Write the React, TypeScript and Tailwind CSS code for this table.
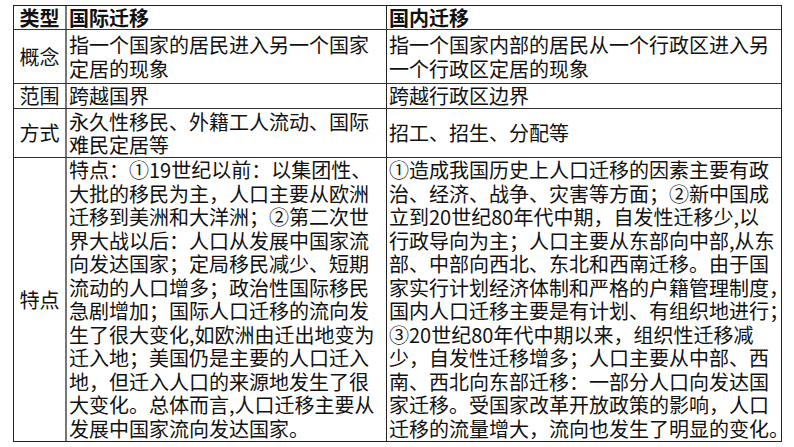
const cjk = { fontFamily: '"Noto Sans CJK SC", "Noto Sans", sans-serif' };

const intlLines = [
  '特点：①19世纪以前：以集团性、',
  '大批的移民为主，人口主要从欧洲',
  '迁移到美洲和大洋洲；②第二次世',
  '界大战以后：人口从发展中国家流',
  '向发达国家；定局移民减少、短期',
  '流动的人口增多；政治性国际移民',
  '急剧增加；国际人口迁移的流向发',
  '生了很大变化,如欧洲由迁出地变为',
  '迁入地；美国仍是主要的人口迁入',
  '地，但迁入人口的来源地发生了很',
  '大变化。总体而言,人口迁移主要从',
  '发展中国家流向发达国家。',
];

const domLines = [
  '①造成我国历史上人口迁移的因素主要有政',
  '治、经济、战争、灾害等方面；②新中国成',
  '立到20世纪80年代中期，自发性迁移少,以',
  '行政导向为主；人口主要从东部向中部,从东',
  '部、中部向西北、东北和西南迁移。由于国',
  '家实行计划经济体制和严格的户籍管理制度，',
  '国内人口迁移主要是有计划、有组织地进行；',
  '③20世纪80年代中期以来，组织性迁移减',
  '少，自发性迁移增多；人口主要从中部、西',
  '南、西北向东部迁移：一部分人口向发达国',
  '家迁移。受国家改革开放政策的影响，人口',
  '迁移的流量增大，流向也发生了明显的变化。',
];

// full-width marks drawn centred in a 1em box, as in the slide
const BOXED = /([：；，①②③])/;

function Line({ text }: { text: string }) {
  return (
    <div className="whitespace-nowrap">
      {text.split(BOXED).map((part, i) =>
        BOXED.test(part) ? (
          <span key={i} className="inline-block w-[1em] text-center">
            {part}
          </span>
        ) : (
          <span key={i}>{part}</span>
        ),
      )}
    </div>
  );
}

function Lines({ lines }: { lines: string[] }) {
  return (
    <>
      {lines.map((l, i) => (
        <Line key={i} text={l} />
      ))}
    </>
  );
}

function Row({
  h,
  label,
  a,
  b,
  head,
  last,
  top,
}: {
  h: string;
  label: string;
  a: React.ReactNode;
  b: React.ReactNode;
  head?: boolean;
  last?: boolean;
  top?: boolean;
}) {
  const weight = head ? 'font-bold' : 'font-normal';
  const align = top ? 'items-start' : 'items-center';
  return (
    <div className={`flex ${h} ${last ? '' : 'border-b border-[#333]'}`}>
      <div className={`w-[53px] shrink-0 flex items-center justify-center border-r-2 border-[#777] ${weight}`}>
        {label}
      </div>
      <div className={`w-[320px] shrink-0 flex ${align} pl-[2px] border-r border-[#222] ${weight}`}>
        <div>{a}</div>
      </div>
      <div className={`flex-1 flex ${align} pl-[2px] ${weight}`}>
        <div>{b}</div>
      </div>
    </div>
  );
}

export default function App() {
  return (
    <div className="w-[794px] h-[447px] bg-white overflow-hidden pt-[5px] pl-[13px]" style={cjk}>
      <div className="w-[769px] border border-[#222] text-[20px] leading-[23.5px] text-[#111]">
        <Row h="h-[24px]" head label="类型" a="国际迁移" b="国内迁移" />
        <Row
          h="h-[54px]"
          label="概念"
          a={<Lines lines={['指一个国家的居民进入另一个国家', '定居的现象']} />}
          b={<Lines lines={['指一个国家内部的居民从一个行政区进入另', '一个行政区定居的现象']} />}
        />
        <Row h="h-[25px]" label="范围" a="跨越国界" b="跨越行政区边界" />
        <Row
          h="h-[49px]"
          label="方式"
          a={<Lines lines={['永久性移民、外籍工人流动、国际', '难民定居等']} />}
          b="招工、招生、分配等"
        />
        <Row
          h="h-[283px]"
          last
          top
          label="特点"
          a={<Lines lines={intlLines} />}
          b={<Lines lines={domLines} />}
        />
      </div>
    </div>
  );
}
